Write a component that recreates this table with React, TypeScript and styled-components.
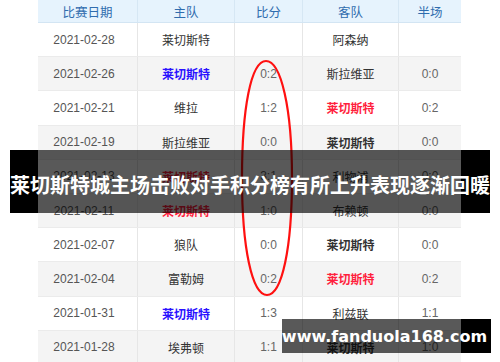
import React from 'react';
import styled, {createGlobalStyle} from 'styled-components';

const GlobalStyle = createGlobalStyle`
    html, body {
        margin: 0;
        padding: 0;
        background: #fff;
    }
    body {
        font-family: "Liberation Sans", "Noto Sans CJK SC", sans-serif;
    }
`

type Tone = 'plain' | 'win' | 'lose' | 'draw'

interface Match {
    date: string
    home: string
    homeTone?: Tone
    score: string
    away: string
    awayTone?: Tone
    half: string
}

const LEI = "莱切斯特"

const matches: Match[] = [
    {date: "2021-02-28", home: LEI, score: "", away: "阿森纳", half: ""},
    {date: "2021-02-26", home: LEI, homeTone: 'lose', score: "0:2", away: "斯拉维亚", half: "0:0"},
    {date: "2021-02-21", home: "维拉", score: "1:2", away: LEI, awayTone: 'win', half: "0:2"},
    {date: "2021-02-19", home: "斯拉维亚", score: "0:0", away: LEI, awayTone: 'draw', half: "0:0"},
    {date: "2021-02-13", home: LEI, homeTone: 'win', score: "3:1", away: "利物浦", half: "0:0"},
    {date: "2021-02-11", home: LEI, homeTone: 'win', score: "1:0", away: "布赖顿", half: "0:0"},
    {date: "2021-02-07", home: "狼队", score: "0:0", away: LEI, awayTone: 'draw', half: "0:0"},
    {date: "2021-02-04", home: "富勒姆", score: "0:2", away: LEI, awayTone: 'win', half: "0:2"},
    {date: "2021-01-31", home: LEI, homeTone: 'lose', score: "1:3", away: "利兹联", half: "1:1"},
    {date: "2021-01-28", home: "埃弗顿", score: "1:1", away: LEI, awayTone: 'draw', half: "1:0"},
]

const toneColor: Record<Tone, string> = {
    plain: '#333',
    win: '#ff1f3d',
    lose: '#2a12ff',
    draw: '#333',
}

const Page = styled.div`
    position: relative;
    width: 500px;
    height: 362px;
    overflow: hidden;
    background: #fff;
`

const Table = styled.div`
    margin-left: 38px;
    width: 423px;
`

const Row = styled.div<{$striped?: boolean}>`
    display: grid;
    grid-template-columns: 99px 97px 68px 96px 63px;
    height: 34.2px;
    background: ${p => p.$striped ? '#f4f4f4' : '#fff'};
    border-bottom: 1px solid #ebebeb;
    box-sizing: border-box;
`

const HeadRow = styled(Row)`
    height: 23px;
    background: #e6f3fd;
    border-bottom: 1px solid #d3e5f3;
`

const Cell = styled.div`
    display: flex;
    align-items: center;
    justify-content: center;
    font-size: 12px;
    color: #555;
    border-left: 1px solid #e6e6e6;
    &:first-child {
        border-left: none;
        padding-right: 7px;
    }
`

const HeadCell = styled(Cell)`
    color: #2f6cae;
    font-size: 12.5px;
    border-left-color: #d6e7f4;
    &:first-child {
        padding-right: 0;
    }
`

const Team = styled(Cell)<{$tone: Tone}>`
    color: ${p => toneColor[p.$tone]};
    font-weight: ${p => p.$tone === 'plain' ? 400 : 700};
`

const Score = styled(Cell)`
    color: #666;
`

const Ring = styled.svg`
    position: absolute;
    left: 0;
    top: 0;
    pointer-events: none;
`

const Banner = styled.div`
    position: absolute;
    left: 10px;
    top: 150px;
    width: 480px;
    height: 63px;
    display: flex;
`

const Shade = styled.div<{$w: number; $solid?: boolean}>`
    width: ${p => p.$w}px;
    height: 100%;
    background: ${p => p.$solid ? '#000' : 'rgba(0, 0, 0, 0.65)'};
`

const Title = styled.div`
    position: absolute;
    inset: 0;
    display: flex;
    align-items: center;
    justify-content: center;
    padding-top: 5px;
    color: #fff;
    font-family: "Noto Sans CJK SC", sans-serif;
    font-weight: 700;
    font-size: 20px;
    white-space: nowrap;
`

const Stamp = styled(Banner)`
    left: 282px;
    top: 319px;
    width: 209px;
    height: 34px;
`

const StampText = styled(Title)`
    font-family: "DejaVu Sans", sans-serif;
    font-size: 16px;
    padding-top: 1px;
    padding-right: 4px;
`

const App: React.FunctionComponent = () => {
    return (
        <Page>
            <GlobalStyle />
            <Table>
                <HeadRow>
                    <HeadCell>比赛日期</HeadCell>
                    <HeadCell>主队</HeadCell>
                    <HeadCell>比分</HeadCell>
                    <HeadCell>客队</HeadCell>
                    <HeadCell>半场</HeadCell>
                </HeadRow>
                {
                    matches.map((m, i) => (
                        <Row key={i} $striped={i % 2 === 1}>
                            <Cell>{m.date}</Cell>
                            <Team $tone={m.homeTone || 'plain'}>{m.home}</Team>
                            <Score>{m.score}</Score>
                            <Team $tone={m.awayTone || 'plain'}>{m.away}</Team>
                            <Score>{m.half}</Score>
                        </Row>
                    ))
                }
            </Table>
            <Ring width="500" height="362" viewBox="0 0 500 362">
                <path
                    d="M266 61 C281 61 292 108 292 178 C292 248 282 295 267 295 C252 295 242 248 242 178 C242 108 251 61 266 61 Z"
                    fill="none"
                    stroke="#ff1010"
                    strokeWidth="2.2"
                />
            </Ring>
            <Banner>
                <Shade $w={28} $solid />
                <Shade $w={423} />
                <Shade $w={29} $solid />
                <Title>莱切斯特城主场击败对手积分榜有所上升表现逐渐回暖</Title>
            </Banner>
            <Stamp>
                <Shade $w={179} />
                <Shade $w={30} $solid />
                <StampText>www.fanduola168.com</StampText>
            </Stamp>
        </Page>
    );
}

export default App;
